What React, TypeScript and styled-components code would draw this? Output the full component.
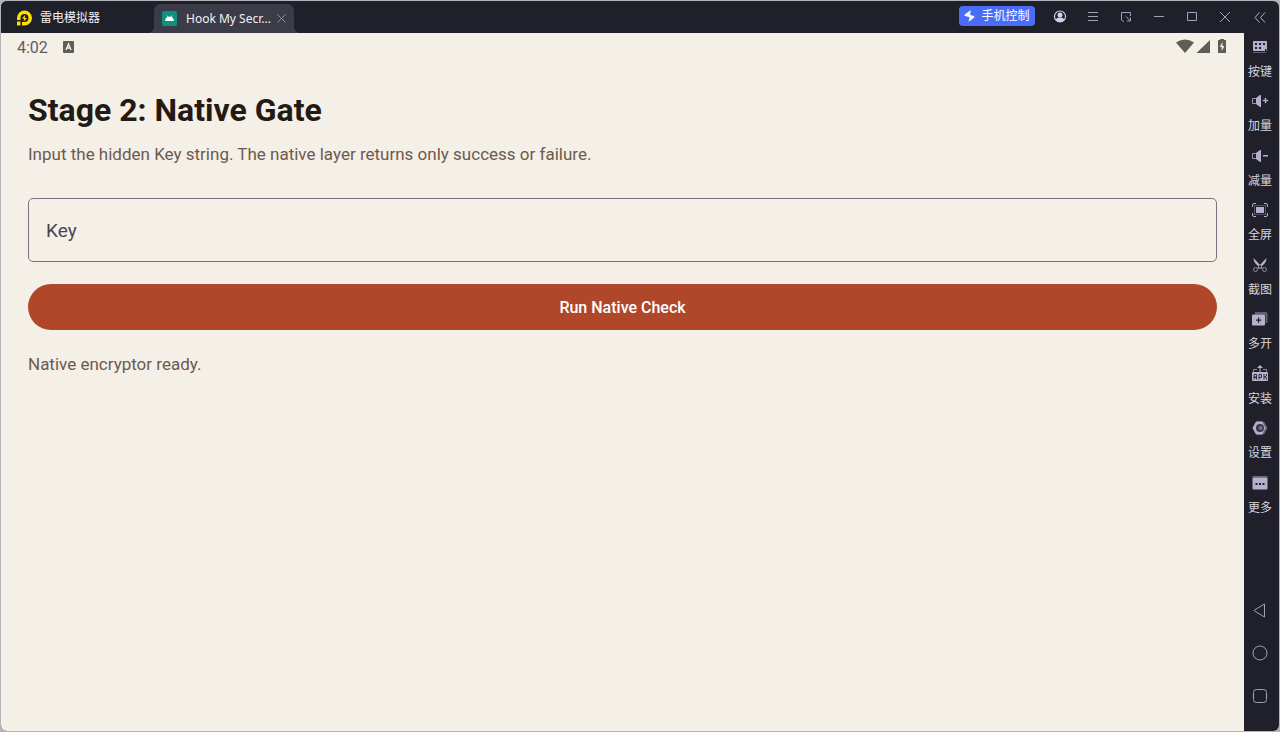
import React from "react";
import styled, { createGlobalStyle } from "styled-components";

const cjk = '"Noto Sans", "Noto Sans CJK SC", sans-serif';

const GlobalStyle = createGlobalStyle`
  * { box-sizing: border-box; }
  html, body, #root { height: 100%; }
  body { margin: 0; background: #b4b5b8; font-family: Roboto, sans-serif; }
  button { border: 0; padding: 0; background: none; font: inherit; color: inherit; cursor: pointer; }
`;

const Desktop = styled.div`
  min-height: 100%;
  display: flex;
  padding: 1px;
`;

const EmulatorWindow = styled.div`
  flex: 1;
  display: flex;
  border-radius: 6px;
  overflow: hidden;
  background: #20202a;
`;

const MainColumn = styled.div`
  flex: 1;
  min-width: 0;
  display: flex;
  flex-direction: column;
`;

const TitleBar = styled.header`
  height: 32px;
  display: flex;
  align-items: flex-end;
  background: #20202a;
  color: #f1f1f5;
  font-family: ${cjk};
`;

const Brand = styled.div`
  width: 153px;
  height: 32px;
  padding: 2px 0 0 15px;
  display: flex;
  align-items: center;
  gap: 7px;
  font-size: 12px;
  line-height: 16px;
`;

const AppTab = styled.div`
  position: relative;
  width: 140px;
  height: 29px;
  padding: 0 8px 0 8px;
  display: flex;
  align-items: center;
  border-radius: 7px 7px 0 0;
  background: #3c3b48;

  &::before, &::after {
    content: "";
    position: absolute;
    bottom: 0;
    width: 6px;
    height: 6px;
  }
  &::before { left: -6px; background: radial-gradient(circle at 0 0, transparent 6px, #3c3b48 6px); }
  &::after { right: -6px; background: radial-gradient(circle at 100% 0, transparent 6px, #3c3b48 6px); }
`;

const TabTitle = styled.span`
  flex: 1;
  margin-left: 9px;
  font-family: "Noto Sans", sans-serif;
  font-size: 12px;
  line-height: 18px;
  white-space: nowrap;
`;

const TabClose = styled.button`
  display: flex;
  color: #92919c;
`;

const WindowTools = styled.div`
  height: 32px;
  margin-left: auto;
  padding-right: 3px;
  display: flex;
  align-items: center;
  color: #a3a1b5;
`;

const PhoneControl = styled.button`
  width: 76px;
  height: 20px;
  margin: 0 8px 2px 0;
  display: flex;
  align-items: center;
  justify-content: center;
  gap: 6px;
  border-radius: 4px;
  background: #4a6cfb;
  color: #fff;
  font-size: 12px;
  line-height: 16px;
`;

const ToolButton = styled.button`
  width: 33px;
  height: 32px;
  display: flex;
  align-items: center;
  justify-content: center;
`;

const Screen = styled.main`
  flex: 1;
  background: #f4efe7;
`;

const StatusBar = styled.div`
  height: 28px;
  padding: 0 17px 0 16px;
  display: flex;
  align-items: center;
  color: #5f5d59;
`;

const Clock = styled.span`
  margin-right: 15px;
  padding-top: 1px;
  font-size: 16px;
  line-height: 28px;
`;

const StatusIcons = styled.div`
  margin-left: auto;
  display: flex;
  align-items: center;
`;

const Content = styled.form`
  padding: 30px 27px 0;
  display: flex;
  flex-direction: column;
`;

const Heading = styled.h1`
  margin: 0 0 13px;
  color: #241a14;
  font-size: 32px;
  font-weight: 700;
  line-height: 38px;
`;

const BodyText = styled.p`
  margin: 0;
  color: #6d5a4f;
  font-size: 17px;
  line-height: 24px;
`;

const KeyField = styled.input`
  width: 100%;
  height: 64px;
  margin: 32px 0 22px;
  padding: 0 17px;
  border: 1px solid #79747e;
  border-radius: 5px;
  outline: 0;
  background: transparent;
  color: #49454f;
  font: 19px/24px Roboto, sans-serif;

  &::placeholder { color: #49454f; opacity: 1; }
`;

const RunButton = styled.button`
  height: 46px;
  margin-bottom: 22px;
  padding-top: 2px;
  border-radius: 23px;
  background: #b1472a;
  color: #fff;
  font-size: 16px;
  font-weight: 500;
  line-height: 24px;
`;

const SideBar = styled.aside`
  width: 35px;
  padding-right: 3px;
  display: flex;
  flex-direction: column;
  align-items: center;
  color: #b4b0ce;
  font-family: ${cjk};
`;

const ToolList = styled.div`
  height: 490px;
  width: 100%;
  display: flex;
  flex-direction: column;
`;

const SideTool = styled.button`
  flex: 1;
  padding: 5px 0 0;
  display: flex;
  flex-direction: column;
  align-items: center;
  justify-content: flex-start;
  gap: 8px;
`;

const SideLabel = styled.span`
  color: #d6d5de;
  font-size: 12px;
  line-height: 16px;
  white-space: nowrap;
`;

const NavKeys = styled.nav`
  margin-top: auto;
  padding-bottom: 14px;
  display: flex;
  flex-direction: column;
`;

const NavKey = styled.button`
  width: 32px;
  height: 43px;
  display: flex;
  align-items: center;
  justify-content: center;
  color: #a3a1b5;
`;

type GlyphProps = { size?: number; children: React.ReactNode };

const Line = ({ size = 16, children }: GlyphProps) => (
  <svg width={size} height={size} viewBox={`0 0 ${size} ${size}`} fill="none" stroke="currentColor" strokeWidth="1" aria-hidden="true">
    {children}
  </svg>
);

const Solid = ({ size = 18, children }: GlyphProps) => (
  <svg width={size} height={size} viewBox={`0 0 ${size} ${size}`} fill="currentColor" aria-hidden="true">
    {children}
  </svg>
);

const dark = "#20202a";

const sideTools = [
  {
    label: "按键",
    icon: (
      <>
        <path d="M3 3h12a1 1 0 0 1 1 1v7h-2v2H3a1 1 0 0 1-1-1V4a1 1 0 0 1 1-1z" />
        <path d="M4 5h2v2H4zM8 5h2v2H8zM12 5h2v2h-2zM4 9h2v2H4zM8 9h2v2H8z" fill={dark} />
        <path d="M2 14h13v1H2z" opacity=".45" />
        <path d="M15 9h1v4h-1z" opacity=".6" />
      </>
    ),
  },
  {
    label: "加量",
    icon: (
      <>
        <path d="M5.500 6.500h-4v5h4" fill="none" stroke="currentColor" opacity=".8" />
        <path d="M5 6l4-3h1v12H9l-4-3z" />
        <path d="M12 8h2V6h1v2h2v1h-2v2h-1V9h-2z" stroke="currentColor" strokeWidth=".4" />
      </>
    ),
  },
  {
    label: "减量",
    icon: (
      <>
        <path d="M5.500 6.500h-4v5h4" fill="none" stroke="currentColor" opacity=".8" />
        <path d="M5 6l4-3h1v12H9l-4-3z" />
        <path d="M12 8h5v1.400h-5z" />
      </>
    ),
  },
  {
    label: "全屏",
    icon: (
      <>
        <path d="M5 6h8v6H5z" />
        <path d="M1.500 6V4Q1.500 2.500 3 2.500H5M13 2.500h2Q16.500 2.500 16.500 4v2M16.500 12v2q0 1.500-1.500 1.500h-2M5 15.500H3Q1.500 15.500 1.500 14v-2" fill="none" stroke="currentColor" />
        <path d="M3.500 4.500h11v9h-11z" fill="none" stroke="currentColor" opacity=".35" />
      </>
    ),
  },
  {
    label: "截图",
    icon: (
      <>
        <path d="M2.500 2l9 9.500-1.500 1.500L4 7Q2.500 5 2.500 2zM15.500 2l-9 9.500L8 13l6-6Q15.500 5 15.500 2z" />
        <g fill="none" stroke="currentColor" opacity=".75">
          <circle cx="4.500" cy="13.500" r="2" />
          <circle cx="13.500" cy="13.500" r="2" />
        </g>
      </>
    ),
  },
  {
    label: "多开",
    icon: (
      <>
        <path d="M4 2h11q1.500 0 1.500 1.500V13h-2V4.500H4z" opacity=".45" />
        <rect x="1" y="4.500" width="13" height="11" rx="1" />
        <path d="M7 7.500h1.200v2h2v1.200h-2v2H7v-2H5V9.500h2z" fill={dark} />
      </>
    ),
  },
  {
    label: "安装",
    icon: (
      <>
        <path d="M8.500 7V3H6l3-3 3 3H9.500v4z" />
        <path d="M6 4.500H2.500V7M12 4.500h3.500V7" fill="none" stroke="currentColor" opacity=".7" />
        <rect x="1" y="7" width="16" height="9" rx="1" />
        <path d="M3 14.500V9.500h2.500v3H3M3 12h2.500v2.500M8 14.500V9.500h2.500v3H8M13 9v5.500M15.500 9v2L13.500 12l2 1v1.500" fill="none" stroke={dark} strokeWidth=".9" />
      </>
    ),
  },
  {
    label: "设置",
    icon: (
      <>
        <path d="M6 2.500h7L16.500 9 13 15.500H6z" opacity=".5" />
        <path d="M5 2.500h6L14.500 9 11 15.500H5L1.500 9z" />
        <circle cx="9" cy="9" r="4" fill={dark} opacity=".85" />
        <circle cx="9.500" cy="9" r="2.200" opacity=".45" />
      </>
    ),
  },
  {
    label: "更多",
    icon: (
      <>
        <path d="M1.500 2h15v1.500h-15z" opacity=".5" />
        <rect x="1.500" y="3.500" width="15" height="12" rx="1" />
        <path d="M4.500 9h2v2h-2zM8 9h2v2H8zM11.500 9h2v2h-2z" fill={dark} />
      </>
    ),
  },
];

const windowTools = [
  {
    label: "Account",
    icon: (
      <g stroke="#d2d0ea">
        <circle cx="8" cy="7.500" r="5.500" strokeWidth="1.200" />
        <circle cx="8" cy="6" r="2.500" fill="#d2d0ea" stroke="none" />
        <path d="M3.500 10.500q1-2 4.500-2t4.500 2Q11 13 8 13t-4.500-2.500z" fill="#d2d0ea" stroke="none" />
      </g>
    ),
  },
  { label: "Menu", icon: <path d="M3 3.500h10M3 7.500h10M3 11.500h10" /> },
  { label: "Compact view", icon: <path d="M6 12.500H5L3.500 11V3.500h9V7M8 7.500l4 4M12.500 8.500v3.500h-3.500" /> },
  { label: "Minimize", icon: <path d="M3 7.500h10" /> },
  { label: "Maximize", icon: <path d="M3.500 3.500h9v8h-9z" /> },
  { label: "Close", icon: <path d="M3 3l10 10M13 3L3 13" /> },
];

export default function App() {
  return (
    <>
      <GlobalStyle />
      <Desktop>
        <EmulatorWindow>
          <MainColumn>
            <TitleBar>
              <Brand>
                <svg width="17" height="17" viewBox="0 0 17 17" aria-hidden="true">
                  <path d="M1 9V8a7.500 7.500 0 1 1 7.500 7.500H6V12h2.500A4 4 0 1 0 4.500 8v2H1z" fill="#fce003" />
                  <path d="M1 11.500h3.500V15.500H1z" fill="#fce003" />
                  <path d="M9 5L6 8.500h2.200L7.500 11.500 11 8H8.800z" fill="#fce003" />
                </svg>
                雷电模拟器
              </Brand>
              <AppTab>
                <svg width="15" height="15" viewBox="0 0 15 15" aria-hidden="true">
                  <rect width="15" height="15" rx="2" fill="#109080" />
                  <path d="M3 10q.2-2.800 2.300-4L4.500 4.600l.5-.3.8 1.400q1.700-.6 3.400 0L10 4.300l.5.3L9.700 6Q11.800 7.200 12 10z" fill="#fff" />
                </svg>
                <TabTitle>Hook My Secr...</TabTitle>
                <TabClose type="button" aria-label="Close tab">
                  <Line size={9}><path d="M.5.5l8 8M8.500.5l-8 8" /></Line>
                </TabClose>
              </AppTab>
              <WindowTools>
                <PhoneControl type="button">
                  <svg width="11" height="14" viewBox="0 0 11 14" fill="#fff" aria-hidden="true">
                    <path d="M7 1L.8 5.600q-.8 1 .3 1.500L5 8l-.8-2.500zM4.500 13l5.700-4.600q.8-1-.3-1.500L6 6l1 2.500zM7 1L4.200 5.500 5 8l2 .5L4.500 13 7 8.500 6 6l-1.500-.5z" />
                    <path d="M7 1L4.500 5.500 7 8.500 4.500 13z" />
                  </svg>
                  手机控制
                </PhoneControl>
                {windowTools.map((tool) => (
                  <ToolButton key={tool.label} type="button" aria-label={tool.label}>
                    <Line>{tool.icon}</Line>
                  </ToolButton>
                ))}
              </WindowTools>
            </TitleBar>
            <Screen>
              <StatusBar>
                <Clock>4:02</Clock>
                <svg width="12" height="12" viewBox="0 0 12 12" aria-hidden="true">
                  <rect x="0" y="0" width="11" height="12" rx="1" fill="#5f5d59" />
                  <path d="M3 9l2.500-6L8 9M4 7h3" fill="none" stroke="#f4efe7" strokeWidth="1.400" />
                </svg>
                <StatusIcons>
                  <svg width="51" height="18" viewBox="0 0 51 18" fill="currentColor" aria-hidden="true">
                    <path d="M0 4.500Q9-1.700 18 4.500L9 15z" />
                    <path d="M34 2v13H20.500z" />
                    <path d="M44 1h4v1h1.500q.5 0 .5.500v12q0 .500-.5.500h-7q-.5 0-.5-.5v-12q0-.5.500-.5H44z" />
                    <path d="M46.500 4L43.800 9h1.900v4l2.700-5h-1.900z" fill="#f4efe7" />
                  </svg>
                </StatusIcons>
              </StatusBar>
              <Content onSubmit={(event) => event.preventDefault()}>
                <Heading>Stage 2: Native Gate</Heading>
                <BodyText>Input the hidden Key string. The native layer returns only success or failure.</BodyText>
                <KeyField type="text" placeholder="Key" aria-label="Key" />
                <RunButton type="submit">Run Native Check</RunButton>
                <BodyText role="status">Native encryptor ready.</BodyText>
              </Content>
            </Screen>
          </MainColumn>
          <SideBar>
            <ToolButton type="button" aria-label="Collapse sidebar">
              <Line><path d="M7.500 3.500L3 8.500l4.500 5M13 3.500L8.500 8.500l4.500 5" /></Line>
            </ToolButton>
            <ToolList>
              {sideTools.map((tool) => (
                <SideTool key={tool.label} type="button">
                  <Solid>{tool.icon}</Solid>
                  <SideLabel>{tool.label}</SideLabel>
                </SideTool>
              ))}
            </ToolList>
            <NavKeys>
              <NavKey type="button" aria-label="Back">
                <Line><path d="M12.500 2L2.500 8q-.8.500 0 1l10 6z" strokeLinejoin="round" /></Line>
              </NavKey>
              <NavKey type="button" aria-label="Home">
                <Line><circle cx="8" cy="8" r="7" /></Line>
              </NavKey>
              <NavKey type="button" aria-label="Recent apps">
                <Line><rect x="1.500" y="1.500" width="13" height="13" rx="3" /></Line>
              </NavKey>
            </NavKeys>
          </SideBar>
        </EmulatorWindow>
      </Desktop>
    </>
  );
}
